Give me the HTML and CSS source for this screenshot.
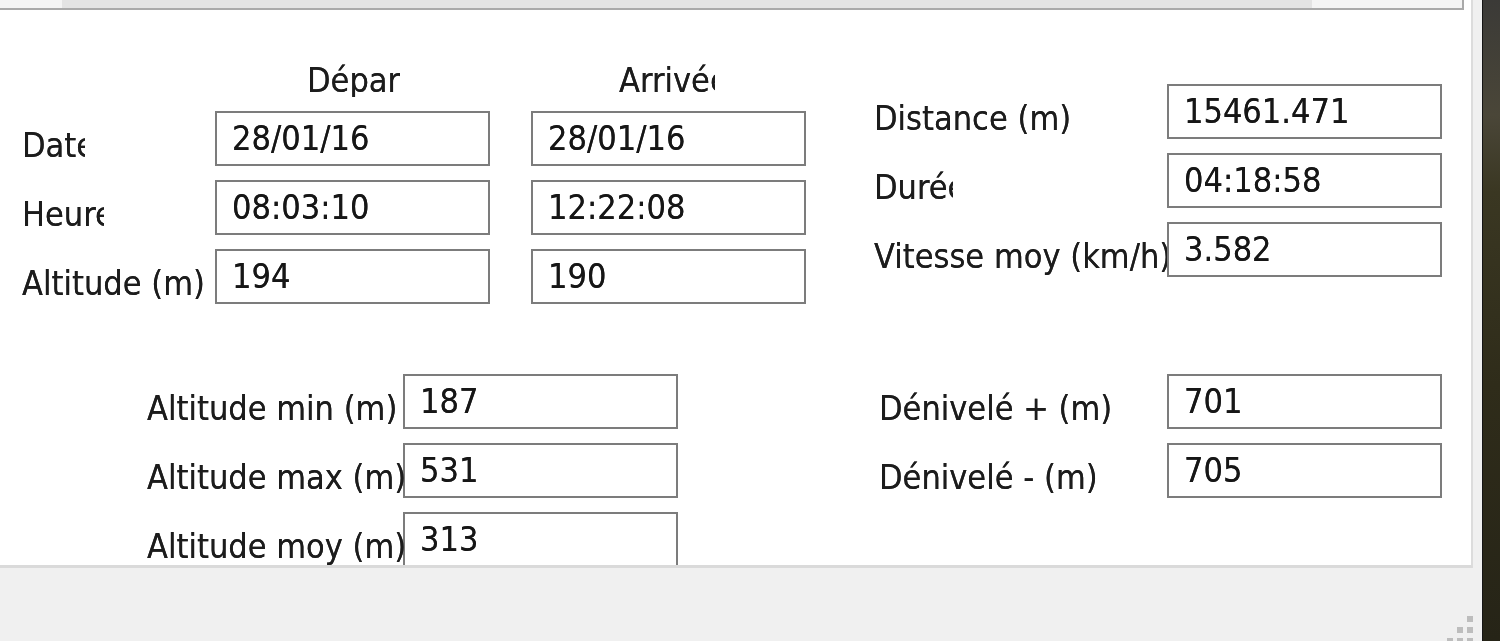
FILE: index.html
```html
<!DOCTYPE html>
<html lang="fr">
<head>
  <meta charset="UTF-8" />
  <title>Statistiques de la trace</title>
  <link rel="stylesheet" href="styles.css">
</head>
<body>
  <div class="window">
    <div class="panel">
      <div class="strip"><div class="thumb"></div></div>

      <div class="section top">
        <div class="grid trip">
          <div></div>
          <div class="head head-dep">Départ</div>
          <div class="head head-arr">Arrivée</div>

          <div class="lbl cut-date">Date</div>
          <div class="field">28/01/16</div>
          <div class="field">28/01/16</div>

          <div class="lbl cut-heure">Heure</div>
          <div class="field">08:03:10</div>
          <div class="field">12:22:08</div>

          <div class="lbl over">Altitude (m)</div>
          <div class="field">194</div>
          <div class="field">190</div>
        </div>

        <div class="grid stats">
          <div class="lbl">Distance (m)</div>
          <div class="field">15461.471</div>

          <div class="lbl cut-duree">Durée</div>
          <div class="field">04:18:58</div>

          <div class="lbl">Vitesse moy (km/h)</div>
          <div class="field">3.582</div>
        </div>
      </div>

      <div class="section bottom">
        <div class="grid alti">
          <div class="lbl">Altitude min (m)</div>
          <div class="field">187</div>

          <div class="lbl over">Altitude max (m)</div>
          <div class="field">531</div>

          <div class="lbl over">Altitude moy (m)</div>
          <div class="field">313</div>
        </div>

        <div class="grid deniv">
          <div class="lbl">Dénivelé + (m)</div>
          <div class="field">701</div>

          <div class="lbl">Dénivelé - (m)</div>
          <div class="field">705</div>
        </div>
      </div>
    </div>

    <div class="footer">
      <svg class="grip" width="30" height="28" viewBox="0 0 30 28">
        <rect x="20" y="0" width="6" height="6" fill="#bdbdbd"/>
        <rect x="10" y="11" width="6" height="6" fill="#bdbdbd"/>
        <rect x="20" y="11" width="6" height="6" fill="#bdbdbd"/>
        <rect x="0" y="22" width="6" height="6" fill="#bdbdbd"/>
        <rect x="10" y="22" width="6" height="6" fill="#bdbdbd"/>
        <rect x="20" y="22" width="6" height="6" fill="#bdbdbd"/>
      </svg>
    </div>
  </div>
</body>
</html>
```

FILE: styles.css
```css
body {
  margin: 0;
  height: 641px;
  overflow: hidden;
  background: linear-gradient(180deg, #3b3a37 0%, #4a4638 18%, #3a3722 30%, #2f2c1a 60%, #262417 100%);
  font-family: "DejaVu Sans Condensed", "DejaVu Sans", sans-serif;
  font-stretch: semi-condensed;
  color: #1c1c1c;
}
.window {
  width: 1482px;
  height: 641px;
  background-color: #f0f0f0;
  border-right: 1px solid #151515;
  display: flex;
  flex-direction: column;
  filter: blur(0.5px);
}
.panel {
  width: 1471px;
  height: 565px;
  background-color: #fff;
  border-right: 2px solid #dcdcdc;
  border-bottom: 3px solid #dadada;
  overflow: hidden;
}
.strip {
  width: 1462px;
  height: 8px;
  background-color: #f4f4f4;
  border-right: 2px solid #a9a9a9;
  border-bottom: 2px solid #a9a9a9;
}
.thumb {
  margin-left: 62px;
  width: 1250px;
  height: 100%;
  background-color: #e3e3e3;
}
.section {
  display: flex;
  align-items: flex-start;
}
.top {
  margin-top: 53px;
}
.bottom {
  margin-top: 70px;
}
.grid {
  display: grid;
  grid-auto-rows: 55px;
  row-gap: 14px;
}
.trip {
  margin-left: 22px;
  grid-template-columns: 152px 275px 275px;
  grid-template-rows: 34px;
  column-gap: 41px;
}
.stats {
  margin-left: 68px;
  margin-top: 21px;
  grid-template-columns: 293px 275px;
}
.alti {
  margin-left: 147px;
  grid-template-columns: 256px 275px;
}
.deniv {
  margin-left: 201px;
  grid-template-columns: 288px 275px;
}
.head {
  font-size: 34px;
  line-height: 34px;
  white-space: nowrap;
  overflow: hidden;
  text-shadow: 0 0 0.6px #333;
}
.head-dep {
  margin-left: 92px;
  width: 93px;
}
.head-arr {
  margin-left: 88px;
  width: 96px;
}
.lbl {
  align-self: center;
  margin-top: 12px;
  font-size: 34px;
  line-height: 40px;
  white-space: nowrap;
  overflow: hidden;
  text-shadow: 0 0 0.6px #333;
}
.lbl.over {
  overflow: visible;
  z-index: 1;
}
.cut-date {
  width: 63px;
}
.cut-heure {
  width: 82px;
}
.cut-duree {
  width: 79px;
}
.field {
  box-sizing: border-box;
  height: 55px;
  border: 2px solid #7c7c7c;
  background-color: #fff;
  padding-left: 15px;
  font-size: 34px;
  line-height: 50px;
  color: #161616;
  white-space: nowrap;
  overflow: hidden;
  text-shadow: 0 0 0.6px #333;
}
.footer {
  flex: 1;
  display: flex;
  justify-content: flex-end;
  align-items: flex-end;
  padding-right: 5px;
}
.grip {
  display: block;
  margin-bottom: -3px;
}
```
